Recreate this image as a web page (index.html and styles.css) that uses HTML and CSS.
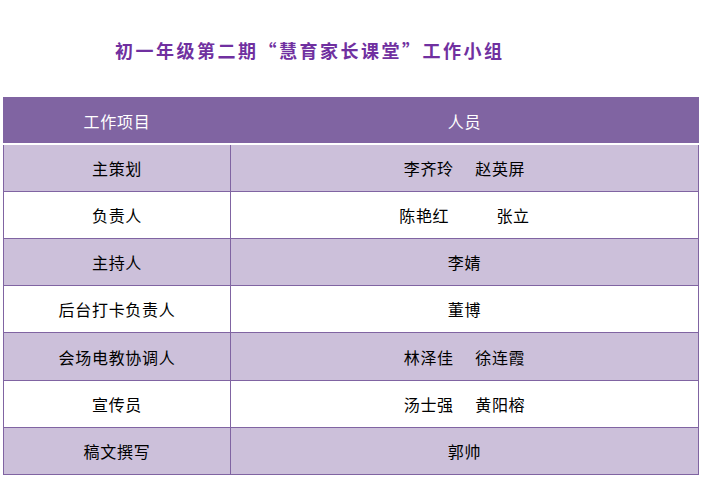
FILE: index.html
```html
<!DOCTYPE html>
<html lang="zh">
<head>
<meta charset="utf-8">
<link rel="stylesheet" href="styles.css">
</head>
<body>
<div class="page">
  <h1 class="title">初一年级第二期“慧育家长课堂”工作小组</h1>
  <table class="grid">
    <colgroup><col class="c1"><col class="c2"></colgroup>
    <thead>
      <tr class="head"><th>工作项目</th><th>人员</th></tr>
    </thead>
    <tbody>
      <tr class="odd"><td>主策划</td><td>李齐玲&nbsp;&nbsp;&nbsp;&nbsp;&nbsp;赵英屏</td></tr>
      <tr class="even"><td>负责人</td><td>陈艳红&nbsp;&nbsp;&nbsp;&nbsp;&nbsp;&nbsp;&nbsp;&nbsp;&nbsp;&nbsp;&nbsp;张立</td></tr>
      <tr class="odd"><td>主持人</td><td>李婧</td></tr>
      <tr class="even"><td>后台打卡负责人</td><td>董博</td></tr>
      <tr class="odd tall"><td>会场电教协调人</td><td>林泽佳&nbsp;&nbsp;&nbsp;&nbsp;&nbsp;徐连霞</td></tr>
      <tr class="even"><td>宣传员</td><td>汤士强&nbsp;&nbsp;&nbsp;&nbsp;&nbsp;黄阳榕</td></tr>
      <tr class="odd"><td>稿文撰写</td><td>郭帅</td></tr>
    </tbody>
  </table>
</div>
</body>
</html>
```

FILE: styles.css
```css
html, body {
  margin: 0;
  padding: 0;
  background: #ffffff;
}
.page {
  width: 703px;
  font-family: "Noto Sans CJK SC", "DejaVu Sans", sans-serif;
}
.title {
  margin: 0;
  height: 97px;
  box-sizing: border-box;
  padding: 38px 0 0 115px;
  font-size: 18px;
  line-height: 24px;
  font-weight: bold;
  letter-spacing: 2.5px;
  color: #7030A0;
  white-space: nowrap;
}
.grid {
  margin-left: 3px;
  width: 696px;
  border-collapse: collapse;
  table-layout: fixed;
}
.c1 { width: 227px; }
.grid th, .grid td {
  text-align: center;
  font-size: 16px;
  font-weight: normal;
  letter-spacing: 0.7px;
  color: #000000;
  border: 1px solid #8064A2;
  padding: 0;
  height: 46px;
  white-space: nowrap;
}
.tall td { height: 47px; }
.head th {
  background: #8064A2;
  color: #ffffff;
  height: 45px;
  border-bottom: 2px solid #ffffff;
}
.odd td { background: #CCC0DA; }
.even td { background: #ffffff; }
```
